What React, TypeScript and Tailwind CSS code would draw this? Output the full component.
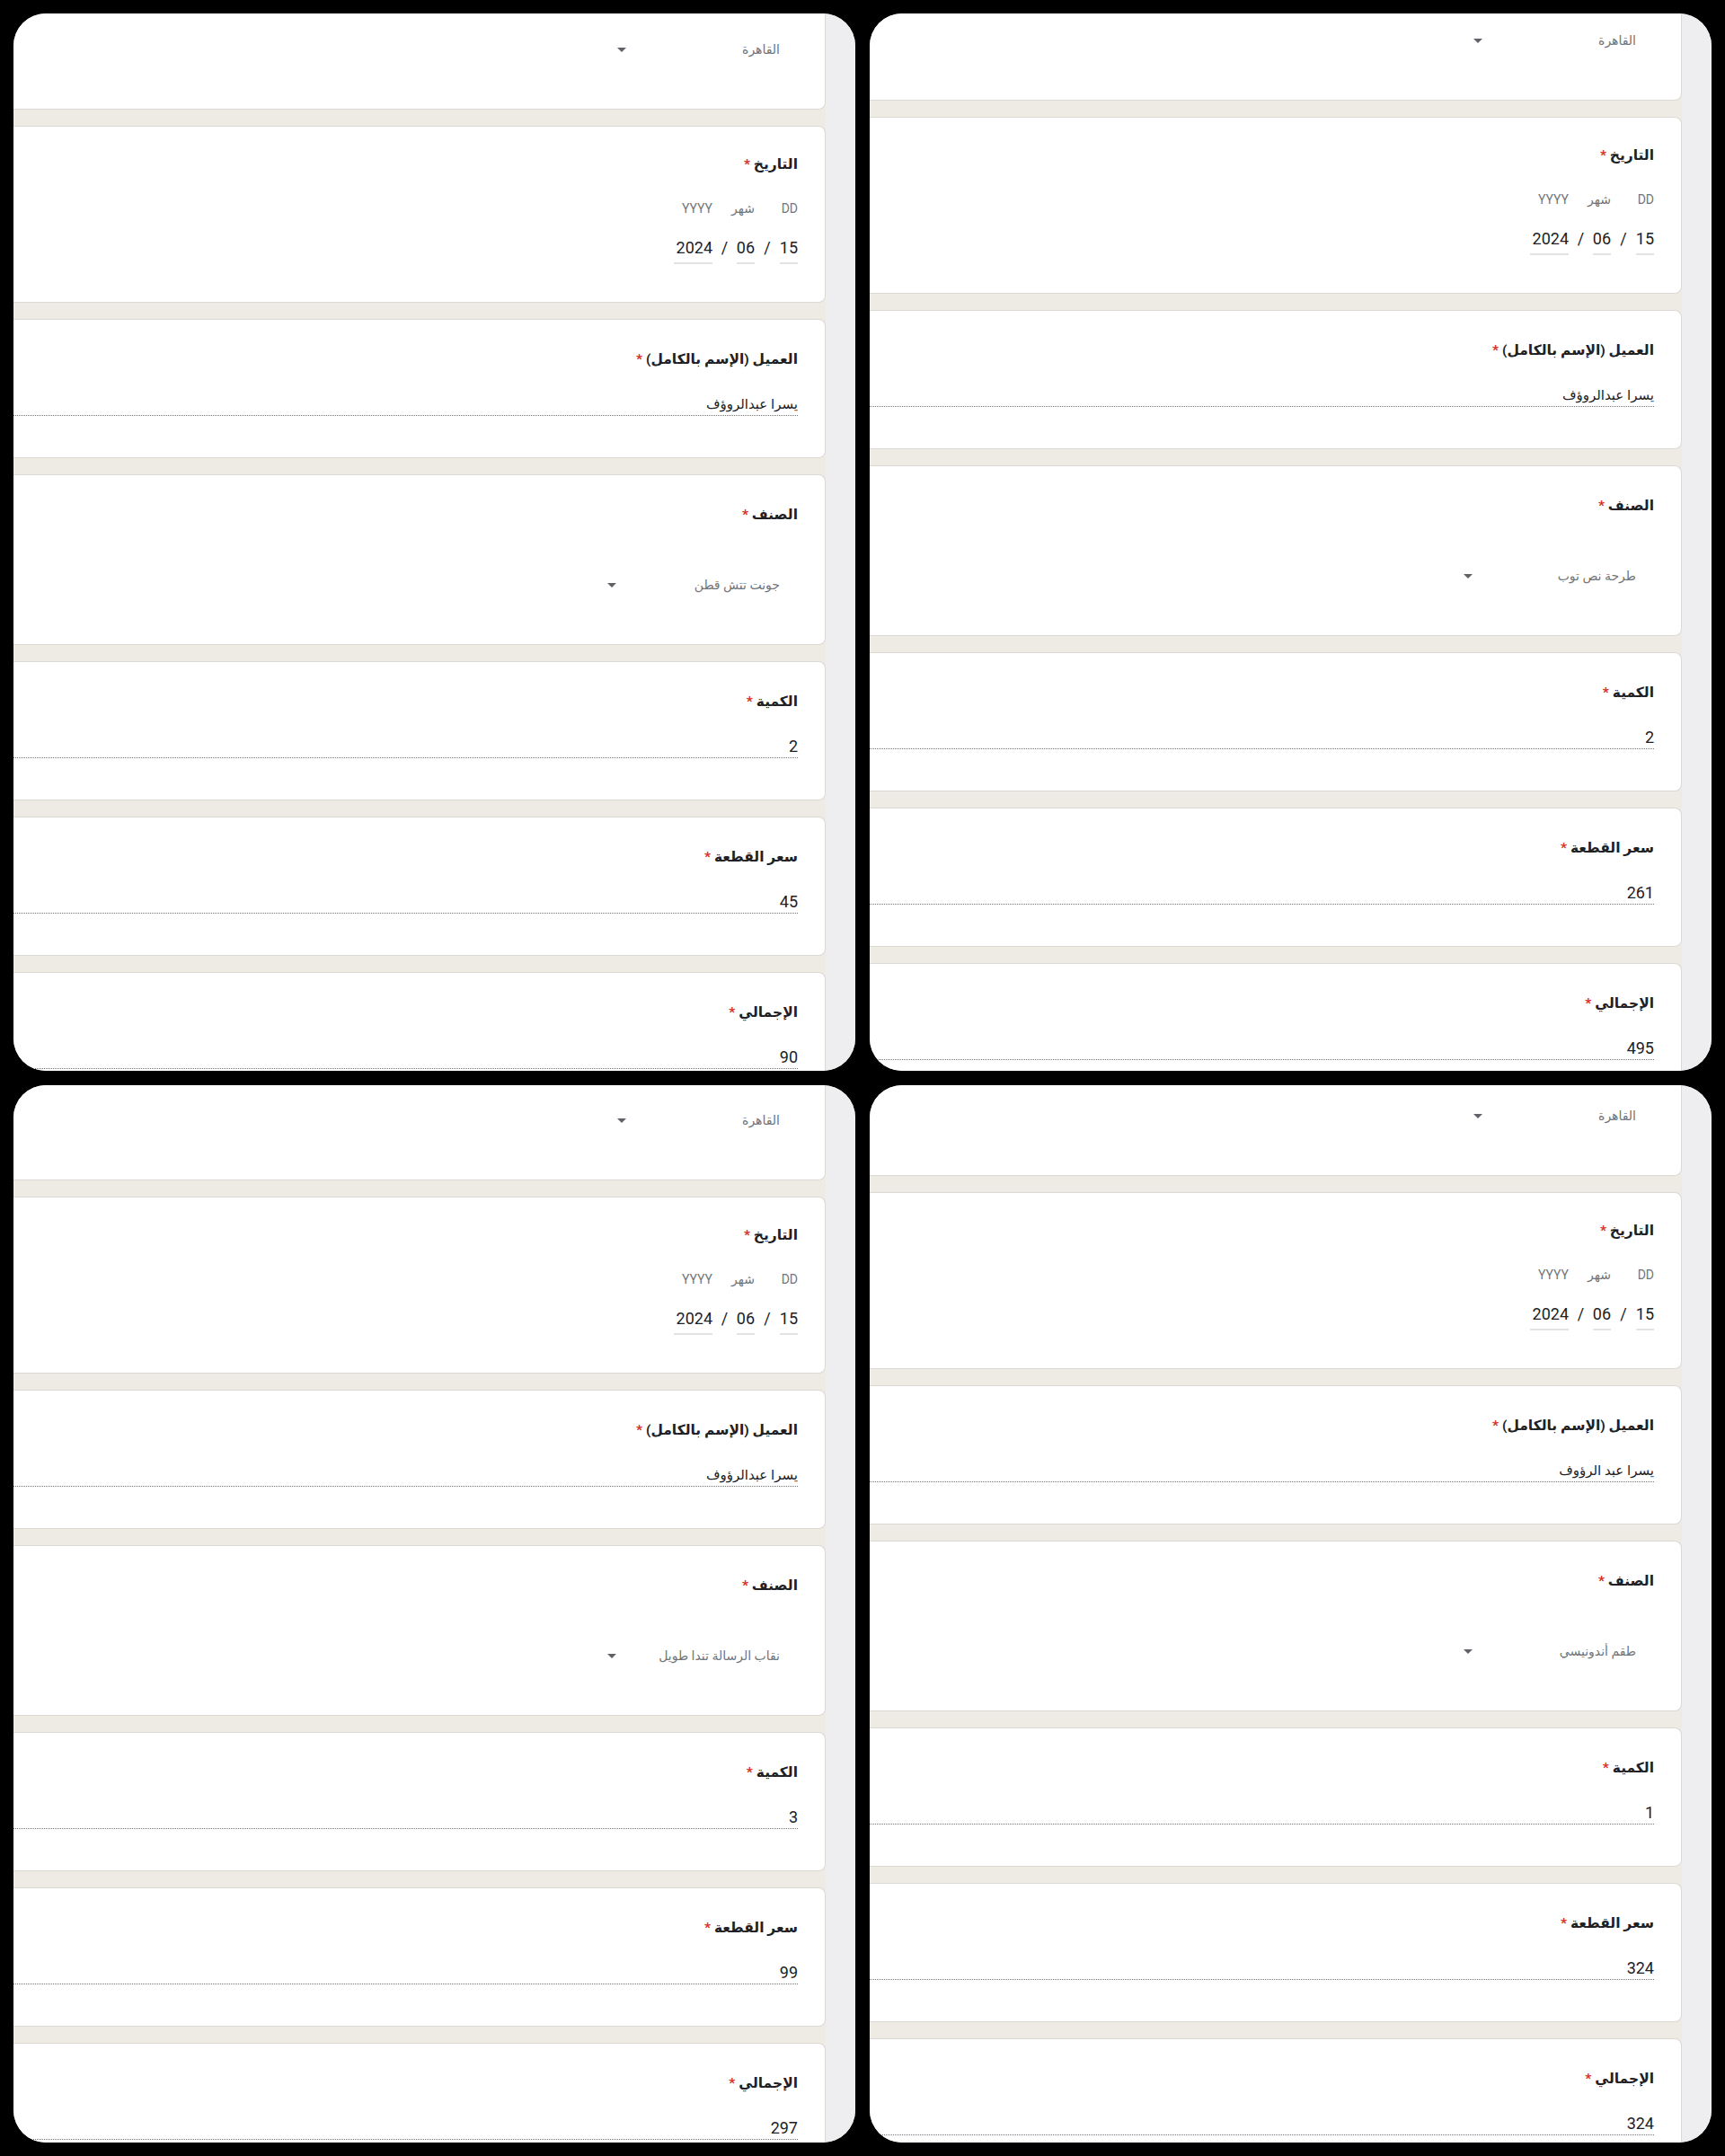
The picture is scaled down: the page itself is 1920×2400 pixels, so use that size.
import React from "react";

type PanelData = {
  offset: string;
  name: string;
  category: string;
  qty: string;
  price: string;
  total: string;
};

const PANELS: PanelData[] = [
  { offset: "-mt-[83px]", name: "يسرا عبدالروؤف", category: "جونت تتش قطن", qty: "2", price: "45", total: "90" },
  { offset: "-mt-[93px]", name: "يسرا عبدالروؤف", category: "طرحة نص توب", qty: "2", price: "261", total: "495" },
  { offset: "-mt-[84px]", name: "يسرا عبدالرؤوف", category: "نقاب الرسالة تندا طويل", qty: "3", price: "99", total: "297" },
  { offset: "-mt-[89px]", name: "يسرا عبد الرؤوف", category: "طقم أندونيسي", qty: "1", price: "324", total: "324" },
];

const cardCls = "rounded-r-lg border border-l-0 border-[#dcd9d4] bg-white pr-[30px]";

function Title({ text }: { text?: string }) {
  if (!text) return <div className="h-6" />;
  return (
    <div className="h-6 text-[15.5px] font-bold leading-6 text-[#202124]">
      {text} <span className="text-[#d93025]">*</span>
    </div>
  );
}

function Arrow() {
  return (
    <svg width="10" height="5" viewBox="0 0 10 5" aria-hidden>
      <path d="M0 0h10L5 5z" fill="#5f6368" />
    </svg>
  );
}

function DropdownCard({ title, value, boxW }: { title?: string; value: string; boxW: string }) {
  return (
    <div className={`${cardCls} h-[190px] shrink-0 pt-[32px]`}>
      <Title text={title} />
      <div className="mt-[54px] flex pr-[20px]">
        <div className={`flex h-6 items-center justify-between ${boxW}`}>
          <span className="text-[14px] text-[#70757a]">{value}</span>
          <Arrow />
        </div>
      </div>
    </div>
  );
}

function TextCard({ title, value, small }: { title: string; value: string; small?: boolean }) {
  return (
    <div className={`${cardCls} h-[155px] shrink-0 pt-[32px]`}>
      <Title text={title} />
      <div
        className={`mt-[26px] h-[25px] border-b border-dotted border-[#6f7276] leading-6 text-[#202124] ${
          small ? "text-[15px]" : "text-[18px]"
        }`}
      >
        {value}
      </div>
    </div>
  );
}

function DatePart({ label, value, w }: { label: string; value: string; w: string }) {
  return (
    <div className={`flex flex-col ${w}`}>
      <div className="h-[18px] text-[14px] leading-[18px] text-[#70757a]">{label}</div>
      <div className="mt-[23px] h-[30px] border-b-2 border-[#e3e3e3] pb-1 text-[18px] leading-6 text-[#202124]">
        {value}
      </div>
    </div>
  );
}

function Slash({ w }: { w: string }) {
  return (
    <div className={`flex flex-col ${w}`}>
      <div className="h-[18px]" />
      <div className="mt-[23px] h-6 text-center text-[18px] leading-6 text-[#202124]">/</div>
    </div>
  );
}

function DateCard() {
  return (
    <div className={`${cardCls} h-[197px] shrink-0 pt-[30px]`}>
      <Title text="التاريخ" />
      <div className="mt-[28px] flex">
        <DatePart label="DD" value="15" w="w-[20px]" />
        <Slash w="w-[28px]" />
        <DatePart label="شهر" value="06" w="w-[20px]" />
        <Slash w="w-[27px]" />
        <DatePart label="YYYY" value="2024" w="w-[43px]" />
      </div>
    </div>
  );
}

function Panel({ p }: { p: PanelData }) {
  return (
    <div className="flex h-[1177px] w-[937px] overflow-hidden rounded-[36px] bg-[#eeeae4]">
      <div dir="rtl" className={`flex w-[904px] shrink-0 flex-col gap-[18px] self-start ${p.offset}`}>
        <DropdownCard value="القاهرة" boxW="w-[181px]" />
        <DateCard />
        <TextCard title="العميل (الإسم بالكامل)" value={p.name} small />
        <DropdownCard title="الصنف" value={p.category} boxW="w-[192px]" />
        <TextCard title="الكمية" value={p.qty} />
        <TextCard title="سعر القطعة" value={p.price} />
        <TextCard title="الإجمالي" value={p.total} />
      </div>
      <div className="w-[33px] shrink-0 bg-[#eeeef0]" />
    </div>
  );
}

export default function App() {
  return (
    <div className="grid h-[2400px] w-[1920px] grid-cols-[937px_937px] grid-rows-[1177px_1177px] gap-4 bg-black p-[15px] font-[Roboto,'DejaVu_Sans',sans-serif]">
      {PANELS.map((p, i) => (
        <Panel key={i} p={p} />
      ))}
    </div>
  );
}
